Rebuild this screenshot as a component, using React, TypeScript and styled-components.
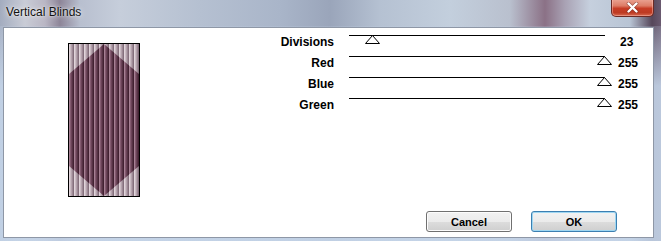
import { Fragment } from 'react';
import { createGlobalStyle, styled } from 'styled-components';

const GlobalStyle = createGlobalStyle`
  html, body {
    margin: 0;
    padding: 0;
    background: #ffffff;
  }
  body {
    font-family: 'Liberation Sans', Arial, sans-serif;
  }
`;

const Window = styled.div`
  width: 661px;
  height: 241px;
  display: flex;
  flex-direction: column;
  overflow: hidden;
  background: linear-gradient(
    90deg,
    #a3acbf 0px,
    #c9ccd6 25px,
    #b9b6c4 45px,
    #8d8598 60px,
    #b8bfcf 80px,
    #c6cedb 120px,
    #b5c0d1 200px,
    #a9b5c9 280px,
    #9aa5ba 330px,
    #b5c1d2 380px,
    #c3cfdd 450px,
    #b9c0ce 510px,
    #8b7186 545px,
    #a9a2b4 565px,
    #c6d0de 590px,
    #b8c4d4 630px,
    #56475a 652px,
    #6a5a70 661px
  );
`;

const TitleBar = styled.div`
  height: 26px;
  display: flex;
  align-items: flex-start;
  justify-content: space-between;
  padding-left: 6px;
`;

const Title = styled.span`
  margin-top: 5px;
  font-size: 12px;
  line-height: 15px;
  color: #111;
  text-shadow: 0 0 6px rgba(255, 255, 255, 0.9), 0 0 2px rgba(255, 255, 255, 0.8);
`;

const CloseButton = styled.div`
  width: 43px;
  height: 18px;
  margin-top: -1px;
  margin-right: 7px;
  box-sizing: border-box;
  display: flex;
  align-items: center;
  justify-content: center;
  border: 1px solid #6b2a24;
  border-top: none;
  border-radius: 0 0 5px 5px;
  background: linear-gradient(180deg, #eba595 0%, #dd7c66 40%, #c73d26 55%, #bd3a22 80%, #d86a50 100%);
  box-shadow: inset 0 0 0 1px rgba(255, 200, 190, 0.45);
`;

const Body = styled.div`
  flex: 1;
  display: flex;
  padding: 1px 7px 3px 3px;
  background: linear-gradient(180deg, rgba(196, 212, 232, 0.2) 0px, rgba(196, 212, 232, 0.9) 60px);
`;

const Panel = styled.div`
  flex: 1;
  display: flex;
  flex-direction: column;
  justify-content: space-between;
  background: #ffffff;
  border: 1px solid #8e97a6;
`;

const TopRow = styled.div`
  display: flex;
  align-items: flex-start;
`;

const PreviewFrame = styled.div`
  margin: 15px 0 0 64px;
  width: 72px;
  height: 154px;
  display: flex;
`;

const Sliders = styled.div`
  margin: 4px 0 0 114px;
  display: grid;
  grid-template-columns: 80px 256px 30px;
  grid-auto-rows: 21px;
  column-gap: 15px;
`;

const Label = styled.span`
  padding-top: 3px;
  text-align: right;
  font-size: 12px;
  font-weight: 700;
  line-height: 15px;
  color: #000;
`;

const Track = styled.div`
  position: relative;
  height: 21px;
`;

const Line = styled.div`
  margin-top: 3px;
  height: 1px;
  background: #000;
`;

const Thumb = styled.svg`
  position: absolute;
  top: 3px;
`;

const Value = styled.span<{ $shift: number }>`
  padding-top: 3px;
  margin-left: ${(p) => p.$shift - 2}px;
  font-size: 12px;
  font-weight: 700;
  line-height: 15px;
  color: #000;
`;

const ButtonRow = styled.div`
  display: flex;
  justify-content: flex-end;
  gap: 19px;
  padding: 0 36px 5px 0;
`;

const Button = styled.button<{ $default?: boolean }>`
  width: 86px;
  height: 21px;
  padding: 0;
  font-family: 'Liberation Sans', Arial, sans-serif;
  font-size: 11px;
  font-weight: 700;
  color: #000;
  border-radius: 3px;
  border: 1px solid ${(p) => (p.$default ? '#3c7fb1' : '#707070')};
  background: linear-gradient(180deg, #f2f2f2 0%, #ebebeb 50%, #dddddd 51%, #cfcfcf 100%);
  box-shadow: inset 0 0 0 1px ${(p) => (p.$default ? '#9fd7f2' : '#fcfcfc')};
`;

const sliders = [
  { label: 'Divisions', value: 23 },
  { label: 'Red', value: 255 },
  { label: 'Blue', value: 255 },
  { label: 'Green', value: 255 },
];

const BlindsPreview = () => (
  <svg width={72} height={154} viewBox="0 0 72 154">
    <defs>
      <linearGradient id="outerStripe" x1="0" x2="1" y1="0" y2="0">
        <stop offset="0" stopColor="#ece1e6" />
        <stop offset="0.45" stopColor="#bba9b3" />
        <stop offset="1" stopColor="#786270" />
      </linearGradient>
      <linearGradient id="innerStripe" x1="0" x2="1" y1="0" y2="0">
        <stop offset="0" stopColor="#b893a6" />
        <stop offset="0.35" stopColor="#7a5066" />
        <stop offset="1" stopColor="#381828" />
      </linearGradient>
      <pattern id="outer" x="1" width="5" height="154" patternUnits="userSpaceOnUse">
        <rect width="5" height="154" fill="url(#outerStripe)" />
      </pattern>
      <pattern id="inner" x="1" width="5" height="154" patternUnits="userSpaceOnUse">
        <rect width="5" height="154" fill="url(#innerStripe)" />
      </pattern>
    </defs>
    <rect x="1" y="1" width="70" height="152" fill="url(#outer)" />
    <polygon points="36,1 71,31 71,123 36,153 1,123 1,31" fill="url(#inner)" />
    <rect x="0.5" y="0.5" width="71" height="153" fill="none" stroke="#000" />
  </svg>
);

export default function App() {
  return (
    <>
      <GlobalStyle />
      <Window>
        <TitleBar>
          <Title>Vertical Blinds</Title>
          <CloseButton>
            <svg width="13" height="11" viewBox="0 0 13 11">
              <path d="M2.5 1.5 L10.5 9.5 M10.5 1.5 L2.5 9.5" stroke="#5a1a14" strokeWidth="3.6" strokeLinecap="round" opacity="0.5" />
              <path d="M2.5 1.5 L10.5 9.5 M10.5 1.5 L2.5 9.5" stroke="#ffffff" strokeWidth="2.4" strokeLinecap="round" />
            </svg>
          </CloseButton>
        </TitleBar>
        <Body>
          <Panel>
            <TopRow>
              <PreviewFrame>
                <BlindsPreview />
              </PreviewFrame>
              <Sliders>
                {sliders.map((s) => (
                  <Fragment key={s.label}>
                    <Label>{s.label}</Label>
                    <Track>
                      <Line />
                      <Thumb
                        width="15"
                        height="9"
                        viewBox="0 0 15 9"
                        style={{ left: `${(s.value / 255) * 255 - 7}px` }}
                      >
                        <polygon points="7.5,0.5 14.5,8.5 0.5,8.5" fill="#ffffff" stroke="#000" strokeWidth="1" />
                      </Thumb>
                    </Track>
                    <Value $shift={s.value < 100 ? 2 : 0}>{s.value}</Value>
                  </Fragment>
                ))}
              </Sliders>
            </TopRow>
            <ButtonRow>
              <Button>Cancel</Button>
              <Button $default>OK</Button>
            </ButtonRow>
          </Panel>
        </Body>
      </Window>
    </>
  );
}
